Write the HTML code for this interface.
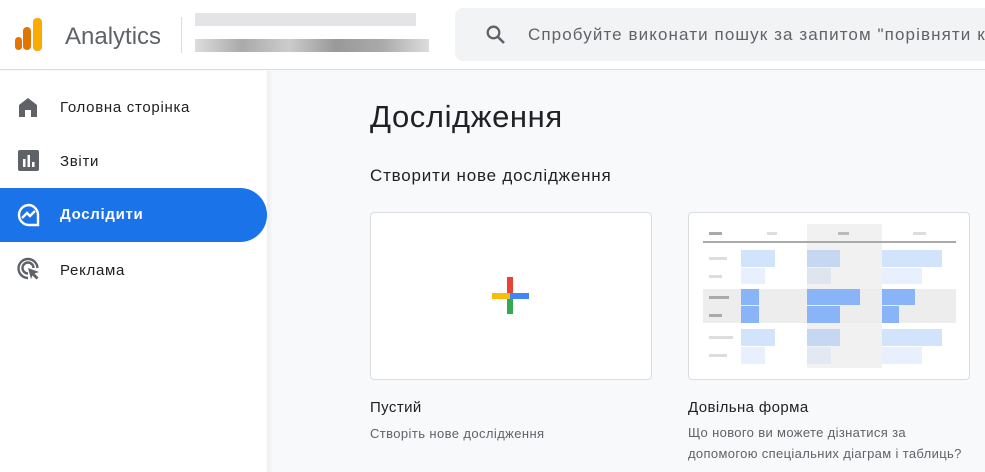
<!DOCTYPE html>
<html><head><meta charset="utf-8"><style>
*{margin:0;padding:0;box-sizing:border-box}
body{width:985px;height:472px;overflow:hidden;background:#f8f9fa;font-family:"Liberation Sans","Noto Sans CJK SC",sans-serif;position:relative;color:#202124}
.a{position:absolute}
.hdr{left:0;top:0;width:985px;height:70px;background:#fff;border-bottom:1px solid #dadce0}
.side{left:0;top:71px;width:267px;height:401px;background:#fff}
.nav{left:0;width:267px;height:54px;font-size:15px;color:#202124;line-height:58px;padding-left:60px;letter-spacing:0.7px}
.card{background:#fff;border:1px solid #dadce0;border-radius:4px}
</style></head><body>
<div class="a hdr"></div>
<div class="a" style="left:15px;top:37px;width:7px;height:13px;border-radius:4px;background:#e37400"></div>
<div class="a" style="left:23px;top:27px;width:8px;height:23px;border-radius:4px;background:#e37400"></div>
<div class="a" style="left:33px;top:18px;width:9px;height:33px;border-radius:4px;background:#f9ab00"></div>
<div class="a" style="left:65px;top:23px;font-size:24px;color:#5f6368">Analytics</div>
<div class="a" style="left:181px;top:17px;width:1px;height:36px;background:#dadce0"></div>
<div class="a" style="left:195px;top:13px;width:221px;height:13px;background:#e4e3e5"></div>
<div class="a" style="left:195px;top:39px;width:234px;height:13px;background:linear-gradient(90deg,#ddd,#aaa 20%,#ccc 40%,#999 60%,#aaa 80%,#ddd)"></div>
<div class="a" style="left:455px;top:8px;width:540px;height:53px;background:#f1f3f4;border-radius:8px"></div>
<svg class="a" style="left:484px;top:23px" width="24" height="24" viewBox="0 0 24 24"><circle cx="9.5" cy="9.5" r="5.8" fill="none" stroke="#5f6368" stroke-width="2.3"/><path d="M14 14l6 6" stroke="#5f6368" stroke-width="2.6"/></svg>
<div class="a" style="left:528px;top:25px;font-size:17px;color:#5f6368;white-space:nowrap;letter-spacing:1.1px">Спробуйте виконати пошук за запитом "порівняти к</div>
<div class="a side"></div>
<div class="a" style="left:267px;top:71px;width:6px;height:401px;background:linear-gradient(90deg,#eceef0,#f8f9fa)"></div>
<div class="a nav" style="top:79px">Головна сторінка</div>
<div class="a nav" style="top:133px">Звіти</div>
<div class="a nav" style="top:188px;background:#1a73e8;color:#fff;font-weight:bold;border-radius:0 27px 27px 0;line-height:54px">Дослідити</div>
<div class="a nav" style="top:242px">Реклама</div>
<svg class="a" style="left:17px;top:96px" width="22" height="22" viewBox="0 0 22 22"><path d="M2 21V9l9-7 9 7v12h-6v-7H8v7z" fill="#5f6368"/></svg>
<svg class="a" style="left:18px;top:150px" width="22" height="22" viewBox="0 0 22 22"><rect x="0" y="0" width="21" height="21" rx="2" fill="#5f6368"/><rect x="5" y="9" width="2.5" height="8" fill="#fff"/><rect x="9.5" y="5" width="2.5" height="12" fill="#fff"/><rect x="14" y="12" width="2.5" height="5" fill="#fff"/></svg>
<svg class="a" style="left:17px;top:203px" width="24" height="24" viewBox="0 0 24 24"><path d="M12 2a10 10 0 1 0 0 20h9V12A10 10 0 0 0 12 2z" fill="none" stroke="#fff" stroke-width="2.4"/><path d="M5 15l5-5 3 3 5-5" fill="none" stroke="#fff" stroke-width="2.4"/></svg>
<svg class="a" style="left:17px;top:257px" width="24" height="24" viewBox="0 0 24 24"><path d="M11 21A9.5 9.5 0 1 1 20.5 11" fill="none" stroke="#5f6368" stroke-width="2.4"/><path d="M11 16.5A5.5 5.5 0 1 1 16.5 11" fill="none" stroke="#5f6368" stroke-width="2.4"/><path d="M11 11l11 4-4.5 1.5 4 4-2 2-4-4L14 22z" fill="#5f6368"/></svg>
<div class="a" style="left:370px;top:99px;font-size:31px;letter-spacing:0.6px">Дослідження</div>
<div class="a" style="left:370px;top:166px;font-size:17px;letter-spacing:0.8px">Створити нове дослідження</div>
<div class="a card" style="left:370px;top:212px;width:282px;height:168px"></div>
<div class="a" style="left:507px;top:277px;width:6px;height:19px;background:#ea4335"></div>
<div class="a" style="left:507px;top:296px;width:6px;height:18px;background:#34a853"></div>
<div class="a" style="left:492px;top:293px;width:18px;height:6px;background:#fbbc04"></div>
<div class="a" style="left:510px;top:293px;width:19px;height:6px;background:#4285f4"></div>
<div class="a" style="left:370px;top:399px;font-size:15px;letter-spacing:0.4px">Пустий</div>
<div class="a" style="left:370px;top:426px;font-size:13px;color:#5f6368;letter-spacing:0.4px">Створіть нове дослідження</div>
<div class="a card" style="left:688px;top:212px;width:282px;height:168px"></div>
<div class="a" style="left:807px;top:224px;width:75px;height:144px;background:#f1f1f1"></div>
<div class="a" style="left:703px;top:289px;width:253px;height:34px;background:#eeeded"></div>
<div class="a" style="left:703px;top:241px;width:253px;height:2px;background:#aaa"></div>
<div class="a" style="left:709px;top:232px;width:13px;height:3px;background:#aaa"></div>
<div class="a" style="left:767px;top:232px;width:10px;height:3px;background:#ddd"></div>
<div class="a" style="left:838px;top:232px;width:11px;height:3px;background:#bbb"></div>
<div class="a" style="left:913px;top:232px;width:13px;height:3px;background:#ddd"></div>
<div class="a" style="left:741px;top:250px;width:34px;height:17px;background:#d2e3fc"></div>
<div class="a" style="left:807px;top:250px;width:33px;height:17px;background:#c6d7f1"></div>
<div class="a" style="left:882px;top:250px;width:60px;height:17px;background:#d2e3fc"></div>
<div class="a" style="left:741px;top:268px;width:24px;height:16px;background:#e8f0fe"></div>
<div class="a" style="left:807px;top:268px;width:24px;height:16px;background:#dfe5ef"></div>
<div class="a" style="left:882px;top:268px;width:40px;height:16px;background:#e8f0fe"></div>
<div class="a" style="left:741px;top:289px;width:18px;height:16px;background:#8ab4f8"></div>
<div class="a" style="left:807px;top:289px;width:53px;height:16px;background:#8ab4f8"></div>
<div class="a" style="left:882px;top:289px;width:33px;height:16px;background:#8ab4f8"></div>
<div class="a" style="left:741px;top:306px;width:18px;height:17px;background:#8ab4f8"></div>
<div class="a" style="left:807px;top:306px;width:33px;height:17px;background:#8ab4f8"></div>
<div class="a" style="left:882px;top:306px;width:17px;height:17px;background:#8ab4f8"></div>
<div class="a" style="left:741px;top:329px;width:34px;height:17px;background:#d2e3fc"></div>
<div class="a" style="left:807px;top:329px;width:33px;height:17px;background:#c6d7f1"></div>
<div class="a" style="left:882px;top:329px;width:60px;height:17px;background:#d2e3fc"></div>
<div class="a" style="left:741px;top:347px;width:24px;height:17px;background:#e8f0fe"></div>
<div class="a" style="left:807px;top:347px;width:24px;height:17px;background:#e3e9f3"></div>
<div class="a" style="left:882px;top:347px;width:40px;height:17px;background:#e8f0fe"></div>
<div class="a" style="left:709px;top:257px;width:18px;height:3px;background:#ddd"></div>
<div class="a" style="left:709px;top:275px;width:13px;height:3px;background:#ddd"></div>
<div class="a" style="left:709px;top:296px;width:20px;height:3px;background:#aaa"></div>
<div class="a" style="left:709px;top:314px;width:13px;height:3px;background:#aaa"></div>
<div class="a" style="left:709px;top:336px;width:24px;height:3px;background:#ddd"></div>
<div class="a" style="left:709px;top:354px;width:18px;height:3px;background:#ddd"></div>
<div class="a" style="left:688px;top:399px;font-size:15px;letter-spacing:0.4px">Довільна форма</div>
<div class="a" style="left:688px;top:422px;font-size:13px;color:#5f6368;line-height:21px;letter-spacing:0.35px">Що нового ви можете дізнатися за<br>допомогою спеціальних діаграм і таблиць?</div>
</body></html>
